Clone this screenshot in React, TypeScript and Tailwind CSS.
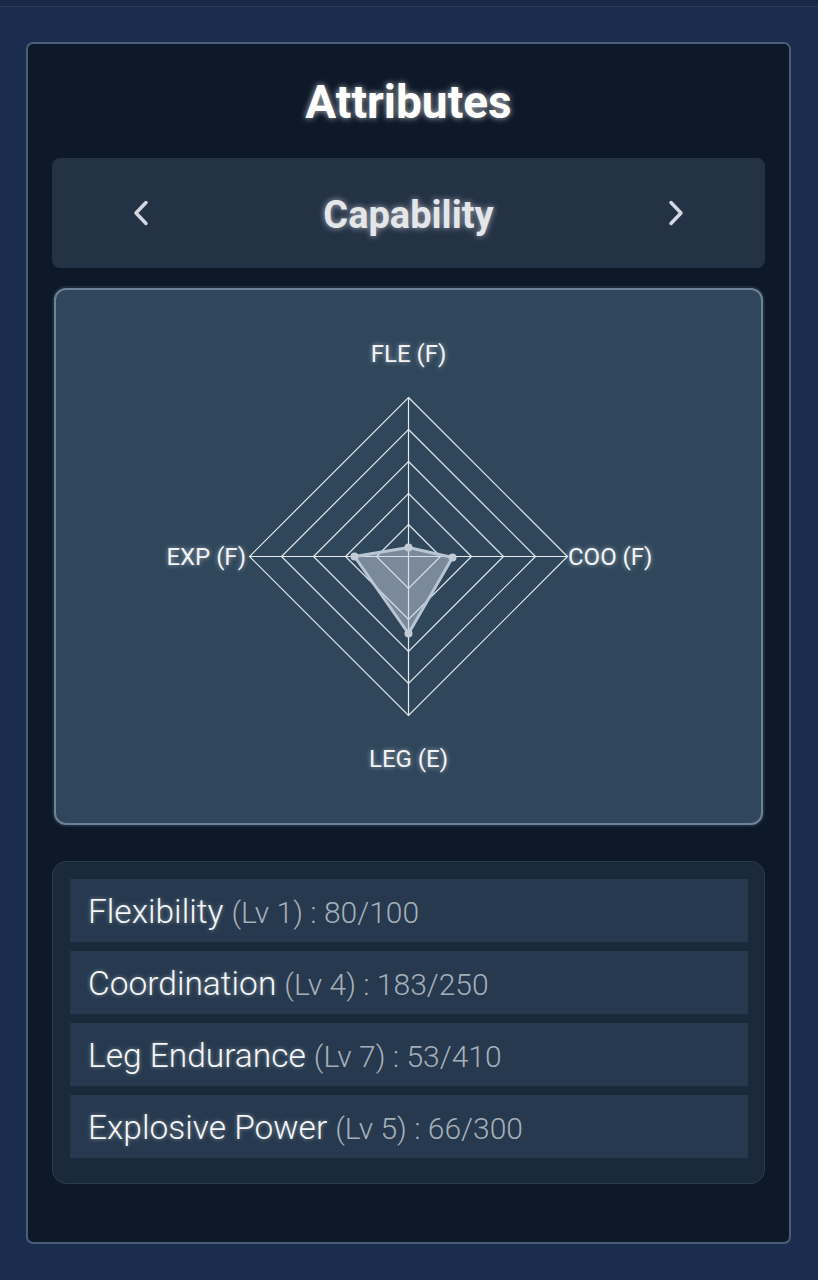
const stats = [
  { name: "Flexibility", lv: 1, cur: 80, max: 100 },
  { name: "Coordination", lv: 4, cur: 183, max: 250 },
  { name: "Leg Endurance", lv: 7, cur: 53, max: 410 },
  { name: "Explosive Power", lv: 5, cur: 66, max: 300 },
];

const cx = 352.5;
const cy = 266.5;
const rings = [159, 127, 95, 63, 32];
// radius of each data point: top, right, bottom, left
const data = [9, 44, 77, 54];

const diamond = (r: number) =>
  `${cx},${cy - r} ${cx + r},${cy} ${cx},${cy + r} ${cx - r},${cy}`;

const pts = [
  [cx, cy - data[0]],
  [cx + data[1], cy + 1],
  [cx, cy + data[2]],
  [cx - data[3], cy],
];

const Chevron = ({ dir }: { dir: "left" | "right" }) => (
  <svg width="16" height="26" viewBox="0 0 16 26" className="text-[#d4d6e2]">
    <polyline
      points={dir === "left" ? "13,2.5 3,13 13,23.5" : "3,2.5 13,13 3,23.5"}
      fill="none"
      stroke="currentColor"
      strokeWidth="3.5"
      strokeLinecap="round"
      strokeLinejoin="round"
    />
  </svg>
);

const Radar = () => {
  return (
    <div className="relative h-full w-full">
      <svg viewBox="0 0 705 533" className="block h-full w-full">
        {rings.map((r) => (
          <polygon key={r} points={diamond(r)} fill="none" stroke="#e6ebf0" strokeWidth="1.2" />
        ))}
        <line x1={cx} y1={cy - 159} x2={cx} y2={cy + 159} stroke="#e6ebf0" strokeWidth="1.2" />
        <line x1={cx - 159} y1={cy} x2={cx + 159} y2={cy} stroke="#e6ebf0" strokeWidth="1.2" />
        <polygon
          points={pts.map((p) => p.join(",")).join(" ")}
          fill="rgba(205,214,226,0.48)"
          stroke="#b9c5d2"
          strokeWidth="3"
          strokeLinejoin="round"
        />
        {pts.map((p, i) => (
          <circle key={i} cx={p[0]} cy={p[1]} r="4" fill="#c3ccd6" />
        ))}
      </svg>
      <span className="absolute left-1/2 top-[50px] -translate-x-1/2 text-[24px] leading-[28px] text-[#f2f4f6] [text-shadow:0_0_5px_rgba(255,255,255,0.55)]">
        FLE (F)
      </span>
      <span className="absolute left-1/2 top-[455px] -translate-x-1/2 text-[24px] leading-[28px] text-[#f2f4f6] [text-shadow:0_0_5px_rgba(255,255,255,0.55)]">
        LEG (E)
      </span>
      <span className="absolute right-[515px] top-[253px] whitespace-nowrap text-[24px] leading-[28px] text-[#f2f4f6] [text-shadow:0_0_5px_rgba(255,255,255,0.55)]">
        EXP (F)
      </span>
      <span className="absolute left-[512px] top-[253px] whitespace-nowrap text-[24px] leading-[28px] text-[#f2f4f6] [text-shadow:0_0_5px_rgba(255,255,255,0.55)]">
        COO (F)
      </span>
    </div>
  );
};

export default function App() {
  return (
    <div className="min-h-[1280px] bg-[#1b2d4f] font-['Roboto',sans-serif]">
      <div className="h-[7px] border-b border-[#2c3d5c] bg-[#1a2946]" />
      <div className="pl-[26px] pr-[27px] pt-[35px]">
        <div className="h-[1202px] rounded-[7px] border-2 border-[#4a5e78] bg-[#0d1828] px-[24px] pt-[30px]">
          <h1 className="text-center text-[46px] font-bold leading-[56px] text-white [text-shadow:0_0_6px_rgba(255,255,255,0.7)]">
            Attributes
          </h1>

          <div className="mt-[28px] flex h-[110px] items-center justify-between rounded-[8px] bg-[#243246] px-[81px]">
            <Chevron dir="left" />
            <span className="pt-[5px] text-[38px] font-bold text-[#e4e6ea] [text-shadow:0_0_6px_rgba(255,255,255,0.6)]">
              Capability
            </span>
            <Chevron dir="right" />
          </div>

          <div className="mt-[18px] h-[541px] rounded-[14px] bg-[#1b2b3c] p-[2px]">
            <div className="h-full rounded-[12px] border-2 border-[#6d8397] bg-[#2f465b]">
              <Radar />
            </div>
          </div>

          <div className="mt-[34px] flex h-[323px] flex-col gap-[9px] rounded-[14px] border border-[#2a3b4d] bg-[#1b2a3a] py-[17px] pl-[17px] pr-[16px]">
            {stats.map((s) => (
              <div key={s.name} className="flex h-[63px] items-center bg-[#26394e] px-[18px] pt-[3px]">
                <span className="text-[33.5px] font-light text-[#f4f6f8] [text-shadow:0_0_4px_rgba(255,255,255,0.45)]">
                  {s.name}
                </span>
                <span className="ml-[8px] text-[30px] font-light text-[#a5afba]">
                  (Lv {s.lv}) : {s.cur}/{s.max}
                </span>
              </div>
            ))}
          </div>
        </div>
      </div>
    </div>
  );
}
